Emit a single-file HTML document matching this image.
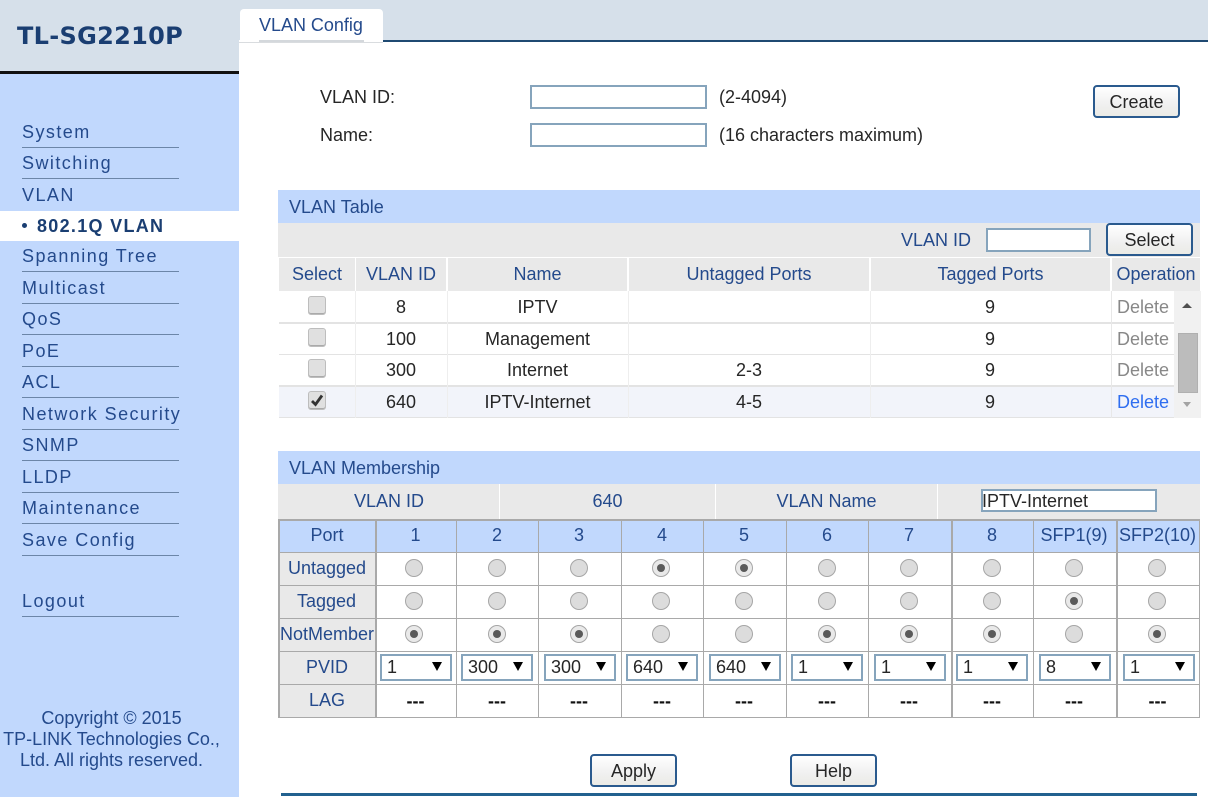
<!DOCTYPE html>
<html><head><meta charset="utf-8"><title>TL-SG2210P</title>
<style>
html,body{margin:0;padding:0;background:#fff}
#p{position:relative;width:1208px;height:797px;overflow:hidden;background:#fff;font:18px/20px "Liberation Sans",sans-serif;color:#262626}
#p div{position:absolute;box-sizing:border-box}
.t{white-space:nowrap}
.c{text-align:center;white-space:nowrap}
.b{color:#244a8c}
.m{left:22px;color:#244a8c;letter-spacing:1.45px;white-space:nowrap}
.l{left:22px;width:157px;height:1px;background:#6c86a8}
.in{background:#fff;border:2px solid #86a4bc}
.btn{width:87px;height:33px;border:2px solid #2a5a8e;border-radius:4px;background:linear-gradient(#fff,#f0f0f0 60%,#ebebe6);text-align:center;line-height:30px;color:#262626}
.g{background:#e9e9e9}
.w{background:#fff}
.cb{width:18px;height:19px;left:308px;background:#e0e0e0;border:1px solid #bdbdbd;border-radius:3px;box-shadow:inset 0 -1px 0 #aaa}
.r{width:18px;height:18px;border-radius:50%;background:#dcdcdc;border:1.5px solid #a6a6a6}
.r.o{background:#e9e9e9}
.r.o:after{content:"";position:absolute;left:3.5px;top:3.5px;width:8px;height:8px;border-radius:50%;background:#5a5a5a}
.s{top:654px;width:72px;height:27px;background:#fff;border:2px solid #86a4bc;padding-left:5px;line-height:23px}
.s:after{content:"";position:absolute;right:8px;top:6px;border-left:5px solid transparent;border-right:5px solid transparent;border-top:9px solid #000}
.hl{left:279px;width:920px;height:1px;background:#a9a9a9}
.vl{top:519px;height:199px;background:#a9a9a9;width:2px}
</style></head><body><div id="p">

<div style="left:0;top:0;width:1208px;height:40px;background:#d6e0ea"></div>
<div style="left:0;top:40px;width:239px;height:32px;background:#d6e0ea"></div>
<div style="left:0;top:71px;width:239px;height:3px;background:#111"></div>
<div style="left:0;top:74px;width:239px;height:723px;background:#c1d8fd"></div>
<div class="t" style="left:17px;top:20px;font:bold 24px/32px 'DejaVu Sans',sans-serif;letter-spacing:.3px;color:#1a3e72">TL-SG2210P</div>

<div style="left:383px;top:40px;width:825px;height:2px;background:#1f4a72"></div>
<div style="left:240px;top:9px;width:143px;height:34px;background:#fff;border-radius:4px 4px 0 0"></div>
<div style="left:239px;top:42px;width:144px;height:1px;background:#d9dcdf"></div>
<div style="left:259px;top:40px;width:105px;height:2px;background:#d4d8dc"></div>
<div class="t b" style="left:259px;top:15px;letter-spacing:-.02px">VLAN Config</div>

<div class="m" style="top:122px">System</div><div class="l" style="top:147px"></div>
<div class="m" style="top:153px">Switching</div><div class="l" style="top:178px"></div>
<div class="m" style="top:185px">VLAN</div>
<div style="left:0;top:211px;width:239px;height:30px;background:#fff"></div>
<div style="left:22px;top:223px;width:5px;height:5px;border-radius:50%;background:#1a3e72"></div>
<div class="m" style="left:37px;top:216px;font-weight:bold;letter-spacing:1.3px;color:#1a3e72">802.1Q VLAN</div>
<div class="m" style="top:246px">Spanning Tree</div><div class="l" style="top:271px"></div>
<div class="m" style="top:278px">Multicast</div><div class="l" style="top:303px"></div>
<div class="m" style="top:309px">QoS</div><div class="l" style="top:334px"></div>
<div class="m" style="top:341px">PoE</div><div class="l" style="top:366px"></div>
<div class="m" style="top:372px">ACL</div><div class="l" style="top:397px"></div>
<div class="m" style="top:404px">Network Security</div><div class="l" style="top:429px"></div>
<div class="m" style="top:435px">SNMP</div><div class="l" style="top:460px"></div>
<div class="m" style="top:467px">LLDP</div><div class="l" style="top:492px"></div>
<div class="m" style="top:498px">Maintenance</div><div class="l" style="top:523px"></div>
<div class="m" style="top:530px">Save Config</div><div class="l" style="top:555px"></div>
<div class="m" style="top:591px">Logout</div><div class="l" style="top:616px"></div>
<div class="c b" style="left:0;top:708px;width:223px">Copyright &copy; 2015</div>
<div class="c b" style="left:0;top:729px;width:223px">TP-LINK Technologies Co.,</div>
<div class="c b" style="left:0;top:750px;width:223px">Ltd. All rights reserved.</div>

<div class="t" style="left:320px;top:87px">VLAN ID:</div>
<div class="in" style="left:530px;top:85px;width:177px;height:24px"></div>
<div class="t" style="left:719px;top:87px">(2-4094)</div>
<div class="t" style="left:320px;top:125px">Name:</div>
<div class="in" style="left:530px;top:123px;width:177px;height:24px"></div>
<div class="t" style="left:719px;top:125px">(16 characters maximum)</div>
<div class="btn" style="left:1093px;top:85px">Create</div>

<div style="left:278px;top:190px;width:922px;height:33px;background:#c1d8fd"></div>
<div class="t b" style="left:289px;top:197px">VLAN Table</div>
<div class="g" style="left:278px;top:223px;width:922px;height:34px"></div>
<div class="t b" style="left:901px;top:230px">VLAN ID</div>
<div class="in" style="left:986px;top:228px;width:105px;height:24px"></div>
<div class="btn" style="left:1106px;top:223px">Select</div>

<div class="g c b" style="left:279px;top:258px;width:76px;height:33px;line-height:32px">Select</div>
<div class="g c b" style="left:356px;top:258px;width:90px;height:33px;line-height:32px">VLAN ID</div>
<div class="g c b" style="left:448px;top:258px;width:179px;height:33px;line-height:32px">Name</div>
<div class="g c b" style="left:629px;top:258px;width:240px;height:33px;line-height:32px">Untagged Ports</div>
<div class="g c b" style="left:871px;top:258px;width:239px;height:33px;line-height:32px">Tagged Ports</div>
<div class="g c b" style="left:1112px;top:258px;width:88px;height:33px;line-height:32px;white-space:nowrap">Operation</div>

<div style="left:279px;top:322px;width:895px;height:2px;background:#e3e3e3"></div>
<div style="left:279px;top:354px;width:895px;height:1px;background:#e3e3e3"></div>
<div style="left:279px;top:385px;width:895px;height:2px;background:#e3e3e3"></div>
<div style="left:279px;top:387px;width:895px;height:30px;background:#f2f4fa"></div>
<div style="left:279px;top:417px;width:895px;height:1px;background:#e3e3e3"></div>
<div style="left:355px;top:291px;width:1px;height:127px;background:#eee"></div>
<div style="left:447px;top:291px;width:1px;height:127px;background:#eee"></div>
<div style="left:628px;top:291px;width:1px;height:127px;background:#eee"></div>
<div style="left:870px;top:291px;width:1px;height:127px;background:#eee"></div>
<div style="left:1111px;top:291px;width:1px;height:127px;background:#e8e8e8"></div>

<div class="cb" style="top:296px"></div>
<div class="c" style="left:356px;top:297px;width:90px">8</div>
<div class="c" style="left:448px;top:297px;width:179px">IPTV</div>
<div class="c" style="left:871px;top:297px;width:238px">9</div>
<div class="t" style="left:1117px;top:297px;color:#888">Delete</div>

<div class="cb" style="top:328px"></div>
<div class="c" style="left:356px;top:329px;width:90px">100</div>
<div class="c" style="left:448px;top:329px;width:179px">Management</div>
<div class="c" style="left:871px;top:329px;width:238px">9</div>
<div class="t" style="left:1117px;top:329px;color:#888">Delete</div>

<div class="cb" style="top:359px"></div>
<div class="c" style="left:356px;top:360px;width:90px">300</div>
<div class="c" style="left:448px;top:360px;width:179px">Internet</div>
<div class="c" style="left:629px;top:360px;width:240px">2-3</div>
<div class="c" style="left:871px;top:360px;width:238px">9</div>
<div class="t" style="left:1117px;top:360px;color:#888">Delete</div>

<div class="cb" style="top:391px"><svg width="16" height="17" viewBox="0 0 16 17" style="position:absolute;left:0;top:0"><path d="M3 9 L6.5 12.5 L13 3.5" fill="none" stroke="#333" stroke-width="2.8"/></svg></div>
<div class="c" style="left:356px;top:392px;width:90px">640</div>
<div class="c" style="left:448px;top:392px;width:179px">IPTV-Internet</div>
<div class="c" style="left:629px;top:392px;width:240px">4-5</div>
<div class="c" style="left:871px;top:392px;width:238px">9</div>
<div class="t" style="left:1117px;top:392px;color:#2f6ef0">Delete</div>

<div style="left:1174px;top:291px;width:27px;height:127px;background:#f1f1f1"></div>
<div style="left:1178px;top:333px;width:20px;height:60px;background:#bcbcbc;border:1px solid #b0b0b0"></div>
<div style="left:1182px;top:303px;width:0;height:0;border-left:5px solid transparent;border-right:5px solid transparent;border-bottom:5px solid #505050"></div>
<div style="left:1183px;top:402px;width:0;height:0;border-left:4.5px solid transparent;border-right:4.5px solid transparent;border-top:5px solid #a3a3a3"></div>

<div style="left:278px;top:451px;width:922px;height:33px;background:#c1d8fd"></div>
<div class="t b" style="left:289px;top:458px">VLAN Membership</div>
<div class="g" style="left:278px;top:484px;width:922px;height:35px"></div>
<div class="w" style="left:499px;top:484px;width:1px;height:35px"></div>
<div class="w" style="left:715px;top:484px;width:1px;height:35px"></div>
<div class="w" style="left:937px;top:484px;width:1px;height:35px"></div>
<div class="c b" style="left:279px;top:491px;width:220px">VLAN ID</div>
<div class="c b" style="left:500px;top:491px;width:215px">640</div>
<div class="c b" style="left:716px;top:491px;width:221px">VLAN Name</div>
<div class="in t" style="left:981px;top:489px;width:176px;height:23px;line-height:20px;text-indent:-1px">IPTV-Internet</div>

<div style="left:279px;top:520px;width:920px;height:32px;background:#c1d8fd"></div>
<div class="g" style="left:279px;top:552px;width:96px;height:165px"></div>

<div class="hl" style="top:519px;height:2px"></div>
<div class="hl" style="top:552px"></div>
<div class="hl" style="top:585px"></div>
<div class="hl" style="top:618px"></div>
<div class="hl" style="top:651px"></div>
<div class="hl" style="top:684px"></div>
<div class="hl" style="top:717px"></div>
<div class="vl" style="left:278px"></div>
<div class="vl" style="left:375px"></div>
<div class="vl" style="left:456px;width:1px"></div>
<div class="vl" style="left:538px;width:1px"></div>
<div class="vl" style="left:621px;width:1px"></div>
<div class="vl" style="left:703px;width:1px"></div>
<div class="vl" style="left:786px;width:1px"></div>
<div class="vl" style="left:868px;width:1px"></div>
<div class="vl" style="left:951px;width:2px"></div>
<div class="vl" style="left:1033px;width:1px"></div>
<div class="vl" style="left:1116px;width:2px"></div>
<div class="vl" style="left:1199px;width:1px"></div>

<div class="c b" style="left:279px;top:525px;width:96px">Port</div>
<div class="c b" style="left:376px;top:525px;width:79px">1</div>
<div class="c b" style="left:457px;top:525px;width:80px">2</div>
<div class="c b" style="left:538px;top:525px;width:82px">3</div>
<div class="c b" style="left:622px;top:525px;width:80px">4</div>
<div class="c b" style="left:703px;top:525px;width:82px">5</div>
<div class="c b" style="left:787px;top:525px;width:80px">6</div>
<div class="c b" style="left:868px;top:525px;width:82px">7</div>
<div class="c b" style="left:952px;top:525px;width:80px">8</div>
<div class="c b" style="left:1033px;top:525px;width:82px">SFP1(9)</div>
<div class="c b" style="left:1117px;top:525px;width:81px">SFP2(10)</div>

<div class="c b" style="left:279px;top:558px;width:96px">Untagged</div>
<div class="c b" style="left:279px;top:591px;width:95px">Tagged</div>
<div class="c b" style="left:279px;top:624px;width:96px">NotMember</div>
<div class="c b" style="left:279px;top:657px;width:96px">PVID</div>
<div class="c b" style="left:279px;top:690px;width:96px">LAG</div>

<div class="r" style="left:405px;top:559px"></div><div class="r" style="left:488px;top:559px"></div><div class="r" style="left:570px;top:559px"></div><div class="r o" style="left:652px;top:559px"></div><div class="r o" style="left:735px;top:559px"></div><div class="r" style="left:818px;top:559px"></div><div class="r" style="left:900px;top:559px"></div><div class="r" style="left:983px;top:559px"></div><div class="r" style="left:1065px;top:559px"></div><div class="r" style="left:1148px;top:559px"></div>
<div class="r" style="left:405px;top:592px"></div><div class="r" style="left:488px;top:592px"></div><div class="r" style="left:570px;top:592px"></div><div class="r" style="left:652px;top:592px"></div><div class="r" style="left:735px;top:592px"></div><div class="r" style="left:818px;top:592px"></div><div class="r" style="left:900px;top:592px"></div><div class="r" style="left:983px;top:592px"></div><div class="r o" style="left:1065px;top:592px"></div><div class="r" style="left:1148px;top:592px"></div>
<div class="r o" style="left:405px;top:625px"></div><div class="r o" style="left:488px;top:625px"></div><div class="r o" style="left:570px;top:625px"></div><div class="r" style="left:652px;top:625px"></div><div class="r" style="left:735px;top:625px"></div><div class="r o" style="left:818px;top:625px"></div><div class="r o" style="left:900px;top:625px"></div><div class="r o" style="left:983px;top:625px"></div><div class="r" style="left:1065px;top:625px"></div><div class="r o" style="left:1148px;top:625px"></div>

<div class="s" style="left:380px">1</div>
<div class="s" style="left:461px">300</div>
<div class="s" style="left:544px">300</div>
<div class="s" style="left:626px">640</div>
<div class="s" style="left:709px">640</div>
<div class="s" style="left:791px">1</div>
<div class="s" style="left:874px">1</div>
<div class="s" style="left:956px">1</div>
<div class="s" style="left:1039px">8</div>
<div class="s" style="left:1123px">1</div>

<div class="c" style="left:376px;top:691px;width:79px;color:#111;font-weight:bold">---</div>
<div class="c" style="left:457px;top:691px;width:80px;color:#111;font-weight:bold">---</div>
<div class="c" style="left:538px;top:691px;width:82px;color:#111;font-weight:bold">---</div>
<div class="c" style="left:622px;top:691px;width:80px;color:#111;font-weight:bold">---</div>
<div class="c" style="left:703px;top:691px;width:82px;color:#111;font-weight:bold">---</div>
<div class="c" style="left:787px;top:691px;width:80px;color:#111;font-weight:bold">---</div>
<div class="c" style="left:868px;top:691px;width:82px;color:#111;font-weight:bold">---</div>
<div class="c" style="left:952px;top:691px;width:80px;color:#111;font-weight:bold">---</div>
<div class="c" style="left:1033px;top:691px;width:82px;color:#111;font-weight:bold">---</div>
<div class="c" style="left:1117px;top:691px;width:81px;color:#111;font-weight:bold">---</div>

<div class="btn" style="left:590px;top:754px">Apply</div>
<div class="btn" style="left:790px;top:754px">Help</div>
<div style="left:281px;top:793px;width:916px;height:3px;background:#22618f"></div>

</div></body></html>
